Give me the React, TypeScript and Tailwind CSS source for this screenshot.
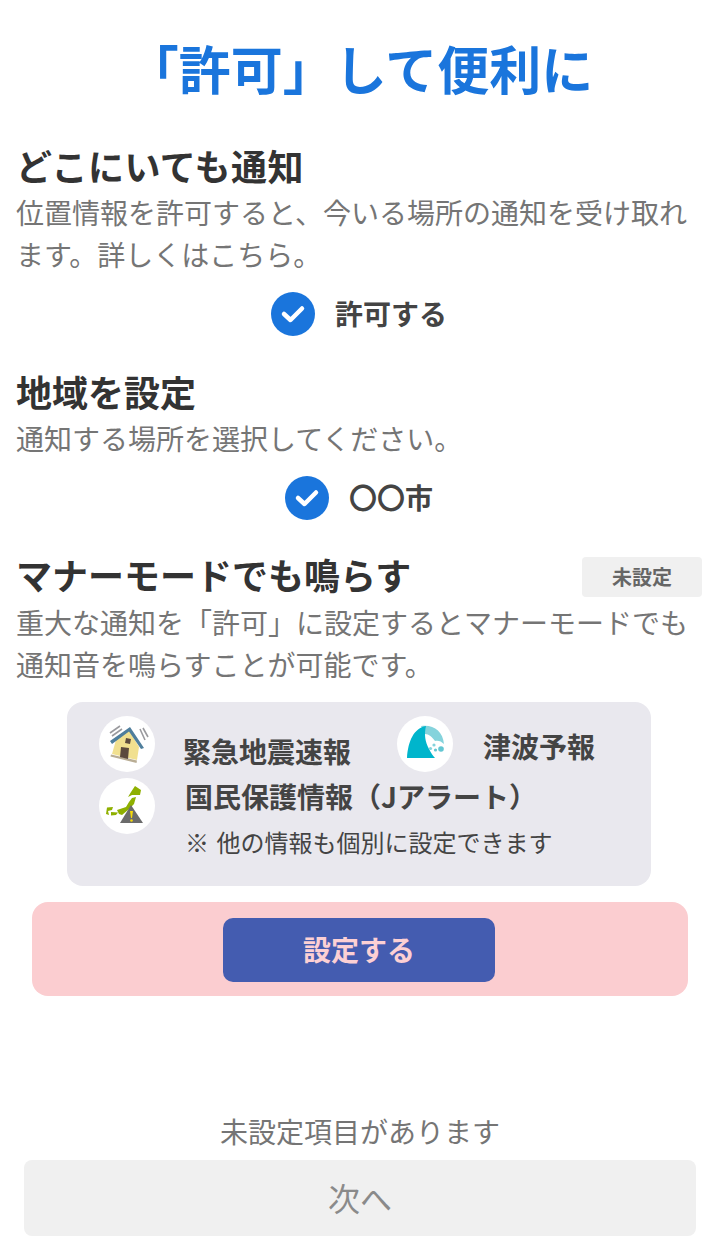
const FONT = "font-['Noto_Sans_CJK_JP','Noto_Sans',sans-serif]";

function CheckBadge() {
  return (
    <svg width="44" height="44" viewBox="0 0 44 44" className="shrink-0">
      <circle cx="22" cy="22" r="22" fill="#1a75dc" />
      <path d="M13 22 L19.5 28 L31 16.5" fill="none" stroke="#fff" strokeWidth="4.5" strokeLinecap="round" strokeLinejoin="round" />
    </svg>
  );
}

function HouseIcon() {
  return (
    <svg width="56" height="56" viewBox="0 0 56 56" className="shrink-0">
      <circle cx="28" cy="28" r="28" fill="#fff" />
      <path d="M17 24 L30 14 L40 31 L38 44 L13 38 Z" fill="#f1e08f" />
      <path d="M12 38.5 L38 44.5 L37.5 47 L11.5 40.5 Z" fill="#b9ad94" />
      <path d="M11 25 L31 11 L45 32 L42 33 L30 15.5 L13 28 Z" fill="#4f7e9c" />
      <path d="M27 22 L32 23 L31 28 L26 27 Z M22 31 L30 32 L29 43 L21 41 Z" fill="#5c4a3d" />
      <path d="M11 17 L21 10 M13 20 L23 13 M41 13 L46 24 M44 12 L49 21" stroke="#9a9a9e" strokeWidth="1.6" />
    </svg>
  );
}

function WaveIcon() {
  return (
    <svg width="56" height="56" viewBox="0 0 56 56" className="shrink-0">
      <circle cx="28" cy="28" r="28" fill="#fff" />
      <path d="M24 10 C36 8 46 15 47 28 C44 25 41 24 38 25 C35 21 32 18 28 18 Z" fill="#85d3dc" />
      <path d="M10 42 C11 25 17 12 29 10 C27 18 28 26 32 33 C34 37 36 40 38 42 Z" fill="#00b5cc" />
      <circle cx="37" cy="29" r="1.6" fill="#85d3dc" />
      <circle cx="33.5" cy="32.5" r="1.6" fill="#85d3dc" />
      <circle cx="44" cy="33" r="2.8" fill="#62c6d2" />
      <circle cx="38.5" cy="34" r="1.6" fill="#62c6d2" />
    </svg>
  );
}

function JapanIcon() {
  return (
    <svg width="56" height="56" viewBox="0 0 56 56" className="shrink-0">
      <circle cx="28" cy="28" r="28" fill="#fff" />
      <path d="M29 19 L32 14 L36 8 L42 12 L41 17 L33 17 Z" fill="#8fb000" />
      <path d="M33 20 L37 19 L35 26 L29 32 L23 37 L20 36 L18 32 L27 29 L30 24 Z" fill="#8fb000" />
      <path d="M8 29.5 L14 29 L13 32 L9 33 L10 37 L7 36 Z M12 34 L19 34.5 L17 37 L12 37.5 Z" fill="#8fb000" />
      <path d="M32 27 L44 45 L21 45 Z" fill="#6b6b6b" />
      <path d="M31 33 H34 L33 40 H32 Z" fill="#f5d90a" />
      <circle cx="32.5" cy="42.5" r="1.3" fill="#f5d90a" />
    </svg>
  );
}

export default function App() {
  return (
    <div className="h-[1252px] w-[718px] overflow-hidden bg-white">
      <div className={`${FONT} flex h-full w-[720px] flex-col`}>
        <h1 className="mt-[36px] text-center text-[52px] leading-[64px] font-bold text-[#1a75dc]">
          「許可」して便利に
        </h1>

        <section className="mt-[41px] pr-[32px] pl-4">
          <h2 className="text-[36px] leading-[48px] font-bold tracking-[0.5px] text-[#333]">どこにいても通知</h2>
          <p className="mt-[2px] text-[28px] leading-[42px] text-[#757575]">
            位置情報を許可すると、今いる場所の通知を受け取れます。詳しくはこちら。
          </p>
          <div className="mt-[17px] ml-[14px] flex items-center justify-center gap-[20px]">
            <CheckBadge />
            <span className="-mt-[2px] text-[28px] leading-[44px] font-bold text-[#444]">許可する</span>
          </div>
        </section>

        <section className="mt-[31px] pr-[32px] pl-4">
          <h2 className="text-[36px] leading-[48px] font-bold text-[#333]">地域を設定</h2>
          <p className="mt-[2px] text-[28px] leading-[42px] text-[#757575]">通知する場所を選択してください。</p>
          <div className="mt-[17px] ml-[14px] flex items-center justify-center gap-[20px]">
            <CheckBadge />
            <span className="-mt-[2px] text-[28px] leading-[44px] font-bold text-[#444]">〇〇市</span>
          </div>
        </section>

        <section className="mt-[30px] pr-[18px] pl-4">
          <div className="flex items-center justify-between">
            <h2 className="text-[36px] leading-[48px] font-bold text-[#333]">マナーモードでも鳴らす</h2>
            <span className="mt-[6px] flex h-10 w-[120px] items-center justify-center rounded bg-[#f0f0f0] text-[20px] font-bold text-[#666]">
              未設定
            </span>
          </div>
          <p className="mt-[3px] pr-[14px] text-[28px] leading-[42px] text-[#757575]">
            重大な通知を「許可」に設定するとマナーモードでも通知音を鳴らすことが可能です。
          </p>
        </section>

        <div className="mt-[17px] ml-[67px] h-[184px] w-[584px] rounded-2xl bg-[#e9e8ee] pt-[14px] pl-8">
          <div className="flex">
            <HouseIcon />
            <span className="mt-[15px] ml-[28px] text-[28px] leading-[40px] font-bold text-[#444]">緊急地震速報</span>
            <span className="ml-[46px]"><WaveIcon /></span>
            <span className="mt-[10px] ml-[30px] text-[28px] leading-[40px] font-bold text-[#444]">津波予報</span>
          </div>
          <div className="mt-[6px] flex">
            <JapanIcon />
            <div className="-mt-[2px] ml-[30px]">
              <p className="text-[28px] leading-[40px] font-bold text-[#444]">国民保護情報（Jアラート）</p>
              <p className="mt-[8px] text-[24px] leading-[36px] text-[#444]">
                <span className="mr-[2px]">※</span> 他の情報も個別に設定できます
              </p>
            </div>
          </div>
        </div>

        <div className="mx-8 mt-4 flex h-[94px] items-center justify-center rounded-2xl bg-[#fbcdd0] pt-[2px] pr-[2px]">
          <button className="h-16 w-[272px] rounded-[10px] bg-[#445cb0] pb-[2px] text-[28px] font-bold text-[#fcd0d4]">
            設定する
          </button>
        </div>

        <p className="mt-auto text-center text-[28px] leading-[42px] text-[#757575]">未設定項目があります</p>
        <button className="mx-6 mt-2 mb-4 h-[76px] rounded-lg bg-[#f0f0f0] pb-[3px] text-[32px] text-[#8a8a8a]">次へ</button>
      </div>
    </div>
  );
}
